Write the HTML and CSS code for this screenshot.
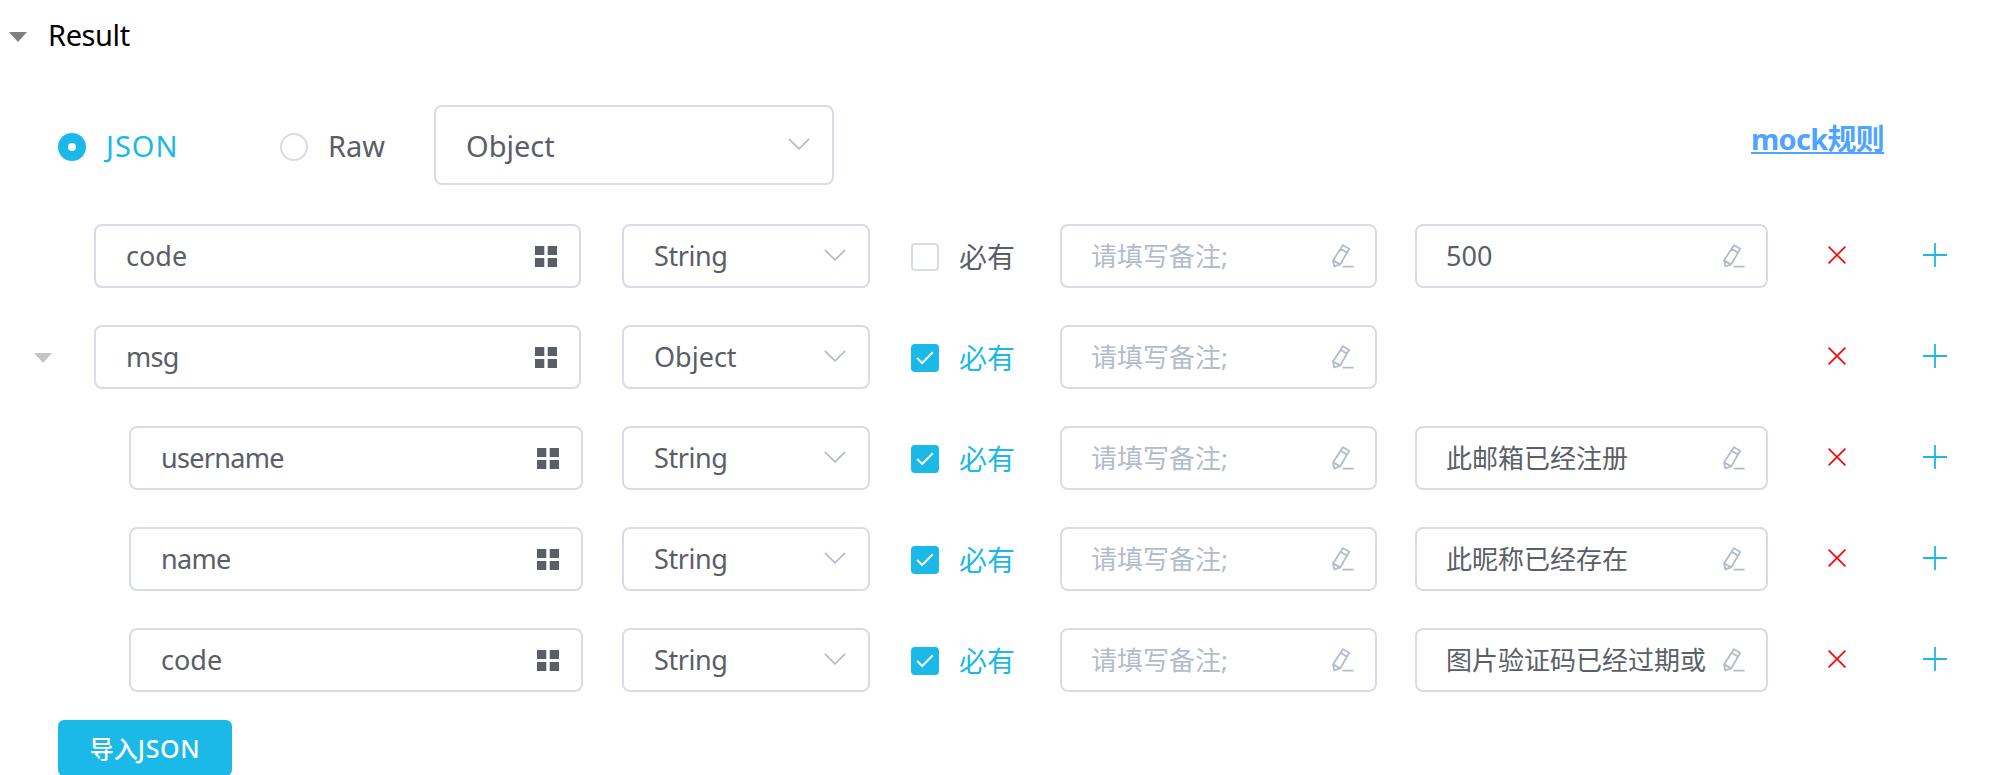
FILE: index.html
```html
<!DOCTYPE html>
<html lang="zh-CN">
<head>
<meta charset="utf-8">
<title>Result</title>
<link rel="stylesheet" href="styles.css">
</head>
<body>
<svg class="defs" width="0" height="0">
  <symbol id="chevron" viewBox="0 0 22 12"><path d="M.9 .9 11 10.9 21.1 .9" fill="none" stroke="currentColor" stroke-width="1.7"/></symbol>
  <symbol id="grid" viewBox="0 0 22 21"><path d="M0 0h9.3v9H0zM12.7 0H22v9h-9.3zM0 12h9.3v9H0zM12.7 12H22v9h-9.3z" fill="currentColor"/></symbol>
  <symbol id="pencil" viewBox="0 0 22 24"><path d="M10.9 1.2 17.2 4.8 8.2 20.4 2.3 22.4 1 16.4ZM8.9 5 15 8.6M1 16.4 8.2 20.4M10.5 22.6H21.7" fill="none" stroke="currentColor" stroke-width="1.8"/></symbol>
  <symbol id="cross" viewBox="0 0 18 18"><path d="M.6 .6 17.4 17.4M17.4 .6 .6 17.4" fill="none" stroke="currentColor" stroke-width="1.6"/></symbol>
  <symbol id="plus" viewBox="0 0 24 24"><path d="M12 0V24M0 12H24" fill="none" stroke="currentColor" stroke-width="1.8"/></symbol>
  <symbol id="tick" viewBox="0 0 18 14"><path d="M1.2 7 6.2 12 16.8 1.2" fill="none" stroke="currentColor" stroke-width="2"/></symbol>
</svg>
<main class="panel">
  <header class="title"><i class="caret"></i><span>Result</span></header>
  <section class="toolbar">
    <label class="choice on"><i class="radio"></i><span class="json">JSON</span></label>
    <label class="choice raw"><i class="radio"></i><span>Raw</span></label>
    <div class="field type-root"><span class="text object">Object</span><svg class="chevron"><use href="#chevron"/></svg></div>
    <a class="mock">mock规则</a>
  </section>
  <section class="rows">
    <div class="row">
      <div class="lead"></div>
      <div class="field name"><span class="text">code</span><svg class="grid"><use href="#grid"/></svg></div>
      <div class="field type"><span class="text string">String</span><svg class="chevron"><use href="#chevron"/></svg></div>
      <label class="must"><i class="box"></i>必有</label>
      <div class="field note"><span class="text">请填写备注;</span><svg class="pencil"><use href="#pencil"/></svg></div>
      <div class="field value"><span class="text">500</span><svg class="pencil"><use href="#pencil"/></svg></div>
      <svg class="cross"><use href="#cross"/></svg><svg class="plus"><use href="#plus"/></svg>
    </div>
    <div class="row">
      <div class="lead"><i class="caret light"></i></div>
      <div class="field name"><span class="text tight">msg</span><svg class="grid"><use href="#grid"/></svg></div>
      <div class="field type"><span class="text object">Object</span><svg class="chevron"><use href="#chevron"/></svg></div>
      <label class="must on"><i class="box"><svg class="tick"><use href="#tick"/></svg></i>必有</label>
      <div class="field note"><span class="text">请填写备注;</span><svg class="pencil"><use href="#pencil"/></svg></div>
      <div class="value"></div>
      <svg class="cross"><use href="#cross"/></svg><svg class="plus"><use href="#plus"/></svg>
    </div>
    <div class="row child">
      <div class="lead"></div>
      <div class="field name"><span class="text tight">username</span><svg class="grid"><use href="#grid"/></svg></div>
      <div class="field type"><span class="text string">String</span><svg class="chevron"><use href="#chevron"/></svg></div>
      <label class="must on"><i class="box"><svg class="tick"><use href="#tick"/></svg></i>必有</label>
      <div class="field note"><span class="text">请填写备注;</span><svg class="pencil"><use href="#pencil"/></svg></div>
      <div class="field value"><span class="text cjk">此邮箱已经注册</span><svg class="pencil"><use href="#pencil"/></svg></div>
      <svg class="cross"><use href="#cross"/></svg><svg class="plus"><use href="#plus"/></svg>
    </div>
    <div class="row child">
      <div class="lead"></div>
      <div class="field name"><span class="text tight">name</span><svg class="grid"><use href="#grid"/></svg></div>
      <div class="field type"><span class="text string">String</span><svg class="chevron"><use href="#chevron"/></svg></div>
      <label class="must on"><i class="box"><svg class="tick"><use href="#tick"/></svg></i>必有</label>
      <div class="field note"><span class="text">请填写备注;</span><svg class="pencil"><use href="#pencil"/></svg></div>
      <div class="field value"><span class="text cjk">此昵称已经存在</span><svg class="pencil"><use href="#pencil"/></svg></div>
      <svg class="cross"><use href="#cross"/></svg><svg class="plus"><use href="#plus"/></svg>
    </div>
    <div class="row child">
      <div class="lead"></div>
      <div class="field name"><span class="text">code</span><svg class="grid"><use href="#grid"/></svg></div>
      <div class="field type"><span class="text string">String</span><svg class="chevron"><use href="#chevron"/></svg></div>
      <label class="must on"><i class="box"><svg class="tick"><use href="#tick"/></svg></i>必有</label>
      <div class="field note"><span class="text">请填写备注;</span><svg class="pencil"><use href="#pencil"/></svg></div>
      <div class="field value"><span class="text cjk">图片验证码已经过期或</span><svg class="pencil"><use href="#pencil"/></svg></div>
      <svg class="cross"><use href="#cross"/></svg><svg class="plus"><use href="#plus"/></svg>
    </div>
  </section>
  <button class="import">导入<span>JSON</span></button>
</main>
</body>
</html>
```
FILE: styles.css
```css
* { box-sizing: border-box; }
body {
  margin: 0;
  height: 775px;
  overflow: hidden;
  background: #fff;
  color: #5a5e66;
  font-family: "Noto Sans", "Noto Sans CJK SC", sans-serif;
  font-size: 27px;
}
svg { display: block; flex: none; }
.defs { position: absolute; }
i { display: block; flex: none; }
.panel { display: flex; flex-direction: column; align-items: flex-start; height: 776px; }

.title { display: flex; align-items: center; gap: 21px; height: 72px; padding-left: 9px; color: #000; font-size: 29px; letter-spacing: -0.4px; }
.title span { margin-top: -3px; }
.caret { width: 18px; height: 10px; background: #808080; clip-path: polygon(0 0, 100% 0, 50% 100%); margin-top: 2px; }
.caret.light { background: #c4c4c4; margin: 2px 0 0; }

.toolbar { display: flex; align-items: center; width: 2003px; height: 80px; margin-top: 33px; padding-left: 58px; font-size: 29px; }
.choice { display: flex; align-items: center; gap: 20px; width: 222px; height: 56px; margin-top: 4px; }
.choice.on { color: #1ab9e8; }
.choice.raw { width: 154px; }
.choice span { margin-top: -4px; }
.choice .json { letter-spacing: 1px; }
.radio { width: 28px; height: 28px; border: 2px solid #d8dce5; border-radius: 50%; }
.on .radio { border: 10px solid #1ab9e8; }

.field { display: flex; align-items: center; justify-content: space-between; height: 64px; border: 2px solid #d8dce5; border-radius: 8px; padding: 0 22px 0 30px; }
.text { white-space: nowrap; line-height: 40px; }
.string { letter-spacing: -0.4px; }
.tight { letter-spacing: -0.7px; }
.type-root { width: 400px; height: 80px; }
.type-root .text { margin-top: 2px; }
.chevron { width: 22px; height: 12px; color: #b4bccc; margin-top: -2px; }
.mock { margin: -13px 0 0 917px; color: #50a3ff; font-weight: 700; letter-spacing: -0.7px; text-decoration: underline; line-height: 40px; white-space: nowrap; }

.rows { display: grid; row-gap: 37px; margin-top: 39px; }
.row { display: grid; grid-template-columns: 94px 528px 289px 149px 355px 413px 95px 24px; align-items: center; height: 64px; }
.lead { padding-left: 34px; }
.name { width: 487px; }
.child .name { width: 454px; margin-left: 35px; }
.type { width: 248px; }
.note { width: 317px; padding-left: 29px; padding-right: 21px; color: #b4bccc; font-size: 26px; }
.value { width: 353px; padding-right: 21px; padding-left: 29px; }
.cjk { font-size: 26px; }
.grid { width: 22px; height: 21px; }
.pencil { width: 22px; height: 24px; color: #b4bccc; }
.cross { width: 18px; height: 18px; color: #f00; margin-top: -2px; }
.plus { width: 24px; height: 24px; color: #1ab9e8; margin-top: -2px; }
.must { display: flex; align-items: center; gap: 20px; margin-top: 2px; font-size: 28px; line-height: 40px; }
.must.on { color: #1ab9e8; }
.box { display: grid; place-items: center; width: 28px; height: 28px; border: 2px solid #d8dce5; border-radius: 4px; }
.on .box { border-color: #1ab9e8; background: #1ab9e8; color: #fff; }
.tick { width: 18px; height: 14px; }

.import { width: 174px; height: 56px; margin: 28px 0 0 58px; padding: 0; border: 0; border-radius: 6px; background: #1ab9e8; color: #fff; font: 500 24px/56px "Noto Sans", "Noto Sans CJK SC", sans-serif; }
.import span { font-size: 25px; letter-spacing: 0.6px; }
```
